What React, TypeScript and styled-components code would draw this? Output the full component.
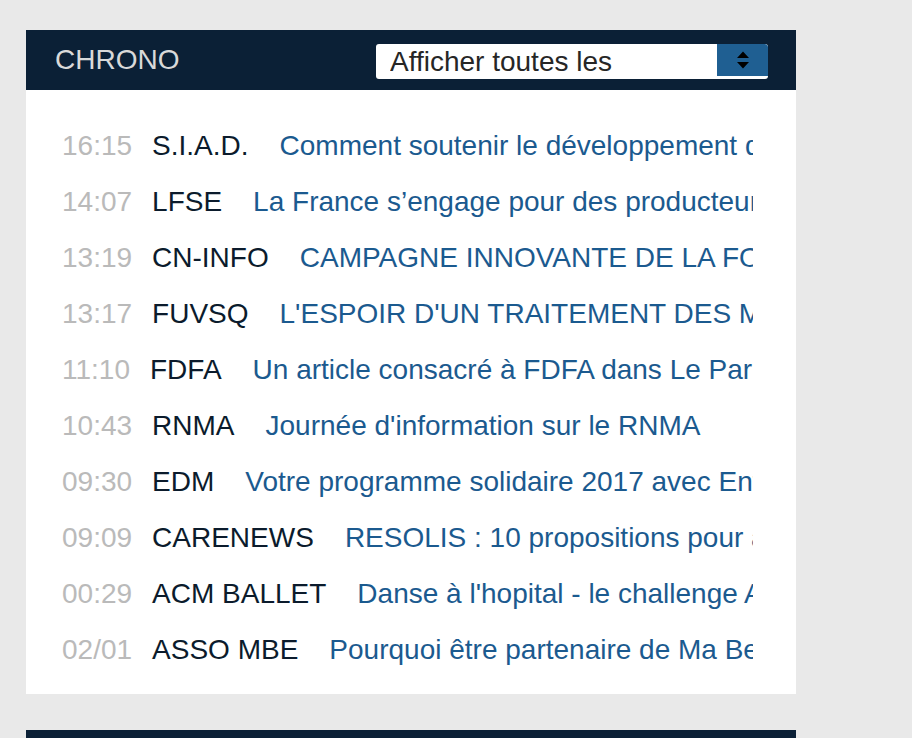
import styled, { createGlobalStyle } from "styled-components";

const GlobalStyle = createGlobalStyle`
  html, body {
    margin: 0;
    padding: 0;
    background: #e9e9e9;
    font-family: "Liberation Sans", Arial, sans-serif;
  }
`;

const Page = styled.div`
  padding: 30px 0 0 26px;
  width: 770px;
  display: flex;
  flex-direction: column;
  gap: 36px;
`;

const Panel = styled.section`
  background: #fff;
`;

const Header = styled.header`
  height: 60px;
  background: #0b2036;
  display: flex;
  align-items: center;
  justify-content: space-between;
  padding: 0 28px 0 29px;
`;

const Title = styled.h2`
  margin: 0;
  font-size: 28px;
  font-weight: 400;
  color: #d9d9d9;
  line-height: 1;
`;

const Select = styled.div`
  width: 392px;
  height: 35px;
  margin-top: 3px;
  box-sizing: border-box;
  background: #fff;
  border-radius: 3px;
  display: flex;
  align-items: flex-start;
  padding-left: 14px;
  overflow: hidden;
`;

const SelectText = styled.span`
  flex: 1;
  font-size: 28px;
  line-height: 35px;
  color: #262626;
  white-space: nowrap;
  overflow: hidden;
`;

const Arrows = styled.span`
  flex-shrink: 0;
  width: 51px;
  height: 32px;
  background: #1f5f92;
  border-top-right-radius: 3px;
  display: flex;
  align-items: center;
  justify-content: center;
`;

const List = styled.ul`
  list-style: none;
  margin: 0;
  padding: 28px 43px 16px 36px;
`;

const Row = styled.li`
  height: 56px;
  line-height: 56px;
  font-size: 28px;
  white-space: nowrap;
  overflow: hidden;
`;

const Time = styled.span`
  color: #bababa;
  margin-right: 20px;
`;

const Source = styled.span`
  color: #0b1b2c;
  margin-right: 31px;
`;

const Link = styled.a`
  color: #1b5a8f;
  text-decoration: none;
`;

const items = [
  ["16:15", "S.I.A.D.", "Comment soutenir le développement de l'entrepreneuriat"],
  ["14:07", "LFSE", "La France s’engage pour des producteurs"],
  ["13:19", "CN-INFO", "CAMPAGNE INNOVANTE DE LA FONDATION"],
  ["13:17", "FUVSQ", "L'ESPOIR D'UN TRAITEMENT DES MALADIES"],
  ["11:10", "FDFA", "Un article consacré à FDFA dans Le Parisien"],
  ["10:43", "RNMA", "Journée d'information sur le RNMA"],
  ["09:30", "EDM", "Votre programme solidaire 2017 avec Enfants du Monde"],
  ["09:09", "CARENEWS", "RESOLIS : 10 propositions pour améliorer"],
  ["00:29", "ACM BALLET", "Danse à l'hopital - le challenge ACM"],
  ["02/01", "ASSO MBE", "Pourquoi être partenaire de Ma Belle Entreprise"],
];

const App = () => (
  <>
    <GlobalStyle />
    <Page>
      <Panel>
        <Header>
          <Title>CHRONO</Title>
          <Select>
            <SelectText>Afficher toutes les</SelectText>
            <Arrows>
              <svg width="12" height="20" viewBox="0 0 12 20">
                <path d="M6 1.5 L12 8 H0 Z M0 12 H12 L6 18.5 Z" fill="#000" />
              </svg>
            </Arrows>
          </Select>
        </Header>
        <List>
          {items.map(([time, source, title], i) => (
            <Row key={i}>
              <Time>{time}</Time>
              <Source>{source}</Source>
              <Link href="#">{title}</Link>
            </Row>
          ))}
        </List>
      </Panel>
      <Header />
    </Page>
  </>
);

export default App;
